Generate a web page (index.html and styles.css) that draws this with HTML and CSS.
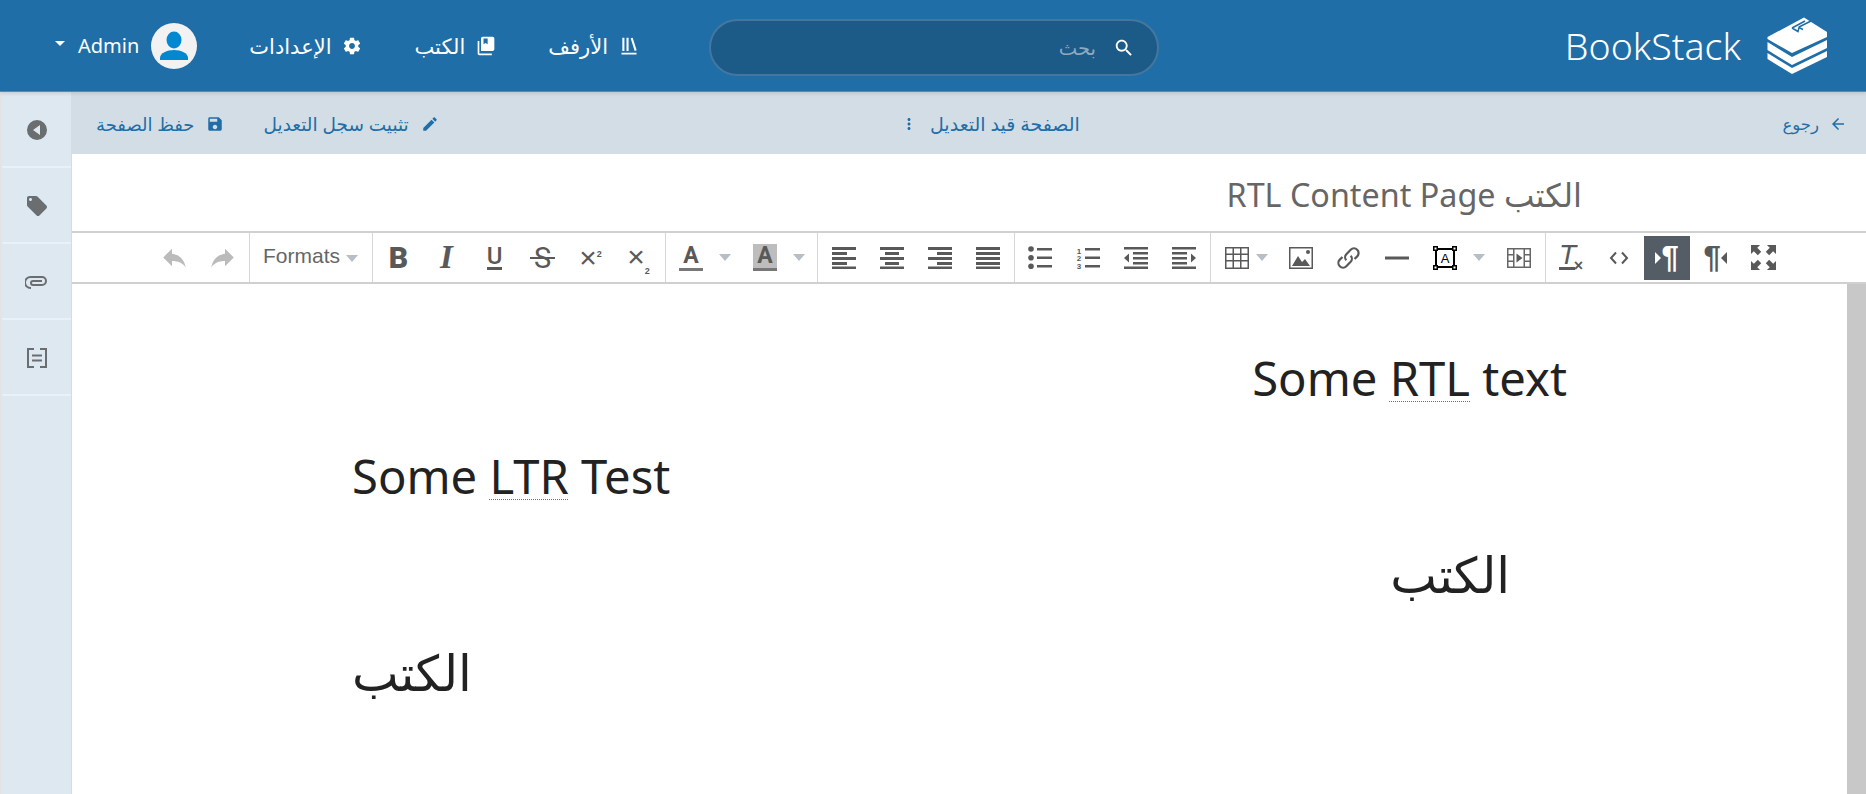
FILE: index.html
```html
<!DOCTYPE html>
<html dir="rtl" lang="ar">
<head>
  <meta charset="utf-8">
  <title>BookStack</title>
  <link rel="stylesheet" href="styles.css">
</head>
<body>

<header class="topbar">
  <a class="brand">
    <svg class="brand-logo" viewBox="8 7 61 58">
      <path fill="#fff" d="M8.500 27 45 7.500 68 22v5L33 43 8.500 29z"/>
      <path fill="#fff" d="M8.500 32 33 47l35-17v8L33 55 8.500 40z"/>
      <path fill="#fff" d="M8.500 43 33 58l35-17v6L33 64 8.500 49z"/>
      <path fill="none" stroke="#206ea7" stroke-width="1.500" d="M33 18l13-7M33 18l6 3.500 1-4 4 2M40 17l12-6"/>
    </svg>
    <span class="brand-name" dir="ltr">BookStack</span>
  </a>
  <div class="search">
    <svg class="search-icon" viewBox="0 0 24 24"><path d="M15.500 14h-.79l-.28-.27C15.410 12.590 16 11.110 16 9.500 16 5.910 13.090 3 9.500 3S3 5.910 3 9.500 5.910 16 9.500 16c1.610 0 3.090-.59 4.230-1.570l.27.28v.79l5 4.990L20.490 19l-4.990-5zm-6 0C7.010 14 5 11.990 5 9.500S7.010 5 9.500 5 14 7.010 14 9.500 11.990 14 9.500 14z"/></svg>
    <span class="search-text">بحث</span>
  </div>
  <nav class="links">
    <a class="link">
      <svg class="link-icon" viewBox="0 0 24 24"><path d="M4 2h2.500v16H4zM9 2h2.500v16H9zM14 2.800l2.400-.8 4.800 15.200-2.400.8zM3 20h18v2.200H3z"/></svg>
      <span>الأرفف</span>
    </a>
    <a class="link">
      <svg class="link-icon" viewBox="0 0 24 24"><path d="M2 6v15c0 1.200 1 2 2 2h15v-2H4V6z"/><path fill-rule="evenodd" d="M8 1h12c1 0 2 1 2 2v13c0 1-1 2-2 2H6V3c0-1 1-2 2-2zm1 2v7l2.500-1.500L14 10V3z"/></svg>
      <span>الكتب</span>
    </a>
    <a class="link">
      <svg class="link-icon" viewBox="0 0 24 24"><path d="M19.430 12.980c.04-.32.07-.64.07-.98s-.03-.66-.07-.98l2.110-1.650c.19-.15.24-.42.12-.64l-2-3.460c-.12-.22-.39-.3-.61-.22l-2.490 1c-.52-.4-1.080-.73-1.690-.98l-.38-2.650C14.460 2.180 14.250 2 14 2h-4c-.25 0-.46.18-.49.42l-.38 2.650c-.61.25-1.170.59-1.690.98l-2.490-1c-.23-.09-.49 0-.61.22l-2 3.460c-.13.22-.07.49.12.64l2.110 1.650c-.04.32-.07.65-.07.98s.03.66.07.98l-2.110 1.650c-.19.15-.24.42-.12.64l2 3.460c.12.22.39.3.61.22l2.490-1c.52.4 1.080.73 1.690.98l.38 2.650c.03.24.24.42.49.42h4c.25 0 .46-.18.49-.42l.38-2.650c.61-.25 1.170-.59 1.690-.98l2.490 1c.23.09.49 0 .61-.22l2-3.460c.12-.22.07-.49-.12-.64l-2.110-1.650zM12 15.500c-1.930 0-3.500-1.570-3.500-3.500s1.570-3.500 3.500-3.500 3.500 1.570 3.500 3.500-1.570 3.500-3.500 3.500z"/></svg>
      <span>الإعدادات</span>
    </a>
    <a class="user">
      <svg class="avatar" viewBox="0 0 46 46">
        <circle cx="23" cy="23" r="23" fill="#f2f2f2"/>
        <ellipse cx="23" cy="17" rx="7.500" ry="8.500" fill="#0288d1"/>
        <path fill="#0288d1" d="M9 37v-2c0-5 7-8 14-8s14 3 14 8v2z"/>
      </svg>
      <span dir="ltr">Admin</span>
      <i class="user-caret"></i>
    </a>
  </nav>
</header>

<main class="workspace">
  <section class="editor">
    <div class="actions">
      <a class="action action-back">
        <svg class="action-icon" viewBox="0 0 24 24"><path d="M20 11H7.830l5.590-5.590L12 4l-8 8 8 8 1.410-1.410L7.830 13H20v-2z"/></svg>
        <span class="back-label">رجوع</span>
      </a>
      <a class="action">
        <span class="state-label">الصفحة قيد التعديل</span>
        <svg class="action-icon" viewBox="0 0 24 24"><path d="M12 8c1.100 0 2-.9 2-2s-.9-2-2-2-2 .9-2 2 .9 2 2 2zm0 2c-1.100 0-2 .9-2 2s.9 2 2 2 2-.9 2-2-.9-2-2-2zm0 6c-1.100 0-2 .9-2 2s.9 2 2 2 2-.9 2-2-.9-2-2-2z"/></svg>
      </a>
      <div class="action-group">
        <a class="action">
          <svg class="action-icon" viewBox="0 0 24 24"><path d="M3 17.250V21h3.750L17.810 9.940l-3.750-3.750L3 17.250zM20.710 7.040c.39-.39.39-1.020 0-1.410l-2.340-2.340c-.39-.39-1.020-.39-1.410 0l-1.830 1.830 3.750 3.750 1.830-1.830z"/></svg>
          <span class="log-label">تثبيت سجل التعديل</span>
        </a>
        <a class="action">
          <svg class="action-icon" viewBox="0 0 24 24"><path d="M17 3H5c-1.110 0-2 .9-2 2v14c0 1.100.89 2 2 2h14c1.100 0 2-.9 2-2V7l-4-4zm-5 16c-1.660 0-3-1.340-3-3s1.340-3 3-3 3 1.340 3 3-1.340 3-3 3zm3-10H5V5h10v4z"/></svg>
          <span>حفظ الصفحة</span>
        </a>
      </div>
    </div>

    <div class="title">الكتب RTL Content Page</div>

    <div class="mce-bar">
      <div class="mce-group">
        <button class="mce-btn"><svg class="ic ic-full" viewBox="1 1 22 22"><path d="M1 1h8L6.500 3.500 10 7l-3 3-3.500-3.500L1 9zM23 1h-8l2.500 2.500L14 7l3 3 3.500-3.500L23 9zM1 23h8l-2.500-2.500L10 17l-3-3-3.500 3.500L1 15zM23 23h-8l2.500-2.500L14 17l3-3 3.500 3.500L23 15z"/></svg></button>
        <button class="mce-btn mce-pil"><span class="pil">¶</span><i class="tri tri-l"></i></button>
        <button class="mce-btn mce-pil is-active"><i class="tri tri-r"></i><span class="pil">¶</span></button>
        <button class="mce-btn"><svg class="ic" viewBox="0 0 24 24"><path fill="none" stroke="currentColor" stroke-width="2" d="M9 6.500 4 12l5 5.500M15 6.500l5 5.500-5 5.500"/></svg></button>
        <button class="mce-btn"><span class="tx"><i>T</i><b>×</b></span></button>
      </div>
      <div class="mce-group">
        <button class="mce-btn"><svg class="ic" viewBox="0 0 24 24"><path fill="#666" fill-rule="evenodd" d="M0 2h24v20H0zM1.500 3.500v17h21v-17z"/><path fill="#666" d="M6 3h1.500v18H6zM16.500 3h1.500v18h-1.500zM1 8h5v1.500H1zM1 14.500h5V16H1zM18 8h5v1.500h-5zM18 14.500h5V16h-5z"/><path d="M9.500 7.500l6 4.500-6 4.500z"/></svg></button>
        <button class="mce-btn mce-split">
          <span class="split-main"><svg class="ic ic-black" viewBox="0 0 24 24"><path fill="none" stroke="currentColor" stroke-width="2" d="M3 3h18v18H3z"/><path d="M0 0h5v5H0zM19 0h5v5h-5zM0 19h5v5H0zM19 19h5v5h-5z"/><path fill="#fff" d="M1.500 1.500h2v2h-2zM20.500 1.500h2v2h-2zM1.500 20.500h2v2h-2zM20.500 20.500h2v2h-2z"/><text x="12" y="17" font-size="13" text-anchor="middle" font-family="Liberation Sans">A</text></svg></span>
          <i class="caret"></i>
        </button>
        <button class="mce-btn"><svg class="ic" viewBox="0 0 24 24"><path d="M0 10.500h24v3H0z"/></svg></button>
        <button class="mce-btn"><svg class="ic ic-wide" viewBox="1 1 22 22"><path fill="none" stroke="currentColor" stroke-width="2" d="M10 14a4 4 0 0 1 0-5.500l4-4a4 4 0 0 1 6 6l-2.500 2.500M14 10a4 4 0 0 1 0 5.500l-4 4a4 4 0 0 1-6-6l2.500-2.500"/></svg></button>
        <button class="mce-btn"><svg class="ic" viewBox="0 0 24 24"><path fill-rule="evenodd" d="M0 1h24v22H0zM1.500 2.500v19h21v-19z"/><path d="M3 20l6-10 4 6 3-3 5 7z"/><circle cx="19" cy="6" r="2"/></svg></button>
        <button class="mce-btn mce-table">
          <svg class="ic" viewBox="0 0 24 24"><path fill-rule="evenodd" d="M0 1h24v22H0zM1.500 2.500v5h6v-5zm7.500 0v5h6v-5zm7.500 0v5h6v-5zM1.500 9v5h6V9zM9 9v5h6V9zm7.500 0v5h6V9zm-15 6.500v6h6v-6zm7.500 0v6h6v-6zm7.500 0v6h6v-6z"/></svg>
          <i class="caret"></i>
        </button>
      </div>
      <div class="mce-group">
        <button class="mce-btn"><svg class="ic" viewBox="0 0 24 24"><path d="M0 1h24v2.500H0zM9 6h15v2.500H9zM9 11h15v2.500H9zM9 16h15v2.500H9zM0 20.500h24V23H0zM0 12l5-4.500v9z" transform="matrix(-1 0 0 1 24 0)"/></svg></button>
        <button class="mce-btn"><svg class="ic" viewBox="0 0 24 24"><path d="M0 1h24v2.500H0zM9 6h15v2.500H9zM9 11h15v2.500H9zM9 16h15v2.500H9zM0 20.500h24V23H0zM0 12l5-4.500v9z"/></svg></button>
        <button class="mce-btn"><svg class="ic" viewBox="0 0 24 24"><path d="M9 2h15v2.500H9zM9 10.500h15V13H9zM9 19h15v2.500H9z"/><text x="3" y="7.500" font-size="8" font-weight="bold" text-anchor="middle" font-family="Liberation Sans">1</text><text x="3" y="15" font-size="8" font-weight="bold" text-anchor="middle" font-family="Liberation Sans">2</text><text x="3" y="22.500" font-size="8" font-weight="bold" text-anchor="middle" font-family="Liberation Sans">3</text></svg></button>
        <button class="mce-btn"><svg class="ic" viewBox="0 0 24 24"><path d="M9 2h15v2.500H9zM9 10.500h15V13H9zM9 19h15v2.500H9z"/><circle cx="3" cy="3" r="2.800"/><circle cx="3" cy="11.800" r="2.800"/><circle cx="3" cy="20.300" r="2.800"/></svg></button>
      </div>
      <div class="mce-group">
        <button class="mce-btn"><svg class="ic" viewBox="0 0 24 24"><path d="M0 1h24v3H0zM0 6h24v3H0zM0 11h24v3H0zM0 16h24v3H0zM0 20.500h24v2.500H0z"/></svg></button>
        <button class="mce-btn"><svg class="ic" viewBox="0 0 24 24"><path d="M0 1h24v3H0zM9 6h15v3H9zM0 11h24v3H0zM9 16h15v3H9zM0 20.500h24v2.500H0z"/></svg></button>
        <button class="mce-btn"><svg class="ic" viewBox="0 0 24 24"><path d="M0 1h24v3H0zM5 6h14v3H5zM0 11h24v3H0zM5 16h14v3H5zM0 20.500h24v2.500H0z"/></svg></button>
        <button class="mce-btn"><svg class="ic" viewBox="0 0 24 24"><path d="M0 1h24v3H0zM0 6h15v3H0zM0 11h24v3H0zM0 16h15v3H0zM0 20.500h24v2.500H0z"/></svg></button>
      </div>
      <div class="mce-group">
        <button class="mce-btn mce-split"><span class="split-main"><span class="letter-a is-bg">A</span></span><i class="caret"></i></button>
        <button class="mce-btn mce-split"><span class="split-main"><span class="letter-a">A</span></span><i class="caret"></i></button>
      </div>
      <div class="mce-group">
        <button class="mce-btn"><span class="script">×<sub>2</sub></span></button>
        <button class="mce-btn"><span class="script">×<sup>2</sup></span></button>
        <button class="mce-btn"><span class="strike">S</span></button>
        <button class="mce-btn"><span class="under">U</span></button>
        <button class="mce-btn"><span class="ital">I</span></button>
        <button class="mce-btn"><span class="bold">B</span></button>
      </div>
      <div class="mce-group">
        <button class="mce-formats"><i class="caret"></i><span dir="ltr">Formats</span></button>
      </div>
      <div class="mce-group is-last">
        <button class="mce-btn is-off"><svg class="ic ic-wide" viewBox="2 4 20 17"><path d="M14 9V5l7 7-7 7v-4.100c-5 0-8.500 1.600-11 5.100 1-5 4-10 11-11z"/></svg></button>
        <button class="mce-btn is-off"><svg class="ic ic-wide" viewBox="2 4 20 17"><path d="M10 9V5l-7 7 7 7v-4.100c5 0 8.500 1.600 11 5.100-1-5-4-10-11-11z"/></svg></button>
      </div>
    </div>

    <div class="pane">
      <div class="page">
        <p>Some <span class="typo">RTL</span> text</p>
        <p class="ltr" dir="ltr">Some <span class="typo">LTR</span> Test</p>
        <p class="ar ar-indent">الكتب</p>
        <p class="ar ltr">الكتب</p>
      </div>
      <div class="scroll"></div>
    </div>
  </section>

  <aside class="tools">
    <a class="tool"><svg class="tool-icon" viewBox="0 0 24 24"><path fill-rule="evenodd" d="M12 2a10 10 0 1 0 0 20 10 10 0 0 0 0-20zm3 5v10l-7-5z"/></svg></a>
    <a class="tool"><svg class="tool-icon" viewBox="0 0 24 24"><path d="M21.410 11.580l-9-9C12.050 2.220 11.550 2 11 2H4c-1.100 0-2 .9-2 2v7c0 .55.22 1.050.59 1.420l9 9c.36.36.86.58 1.410.58.55 0 1.050-.22 1.410-.59l7-7c.37-.36.59-.86.59-1.410 0-.55-.23-1.060-.59-1.420zM5.500 7C4.670 7 4 6.330 4 5.500S4.670 4 5.500 4 7 4.670 7 5.500 6.330 7 5.500 7z"/></svg></a>
    <a class="tool"><svg class="tool-icon" viewBox="0 0 24 24"><path fill="none" stroke="currentColor" stroke-width="2" d="M6 18h-.5a5 5 0 0 1 0-11H17a4 4 0 0 1 0 8H8a2 2 0 0 1 0-4h9"/></svg></a>
    <a class="tool"><svg class="tool-icon" viewBox="0 0 24 24"><path fill="none" stroke="currentColor" stroke-width="2" d="M9 3H3v18h6M15 3h6v18h-6M7 9.500h10M7 14.500h10"/></svg></a>
  </aside>
</main>

</body>
</html>
```
FILE: styles.css
```css
* {
  box-sizing: border-box;
}

html, body {
  margin: 0;
  height: 794px;
  overflow: hidden;
}

body {
  font-family: "Noto Sans", "DejaVu Sans", sans-serif;
  color: #222;
  background: #fff;
}

/* top bar */
.topbar {
  height: 92px;
  background: #206ea7;
  border-bottom: 1px solid #4f8dbb;
  display: flex;
  align-items: center;
  padding: 0 38px 0 40px;
  color: #fff;
  position: relative;
  z-index: 2;
  box-shadow: 0 1px 4px rgba(0, 0, 0, 0.15);
}

.brand {
  display: flex;
  align-items: center;
  gap: 26px;
  width: 261px;
}

.brand-logo {
  width: 61px;
  height: 58px;
  flex: none;
}

.brand-name {
  font-size: 37.500px;
  font-weight: 300;
  line-height: 1;
}

.search {
  width: 450px;
  height: 57px;
  margin: 4px 408px 0 0;
  border-radius: 29px;
  background: #1c5a88;
  border: 2px solid #43779f;
  display: flex;
  align-items: center;
  padding-right: 22px;
  gap: 17px;
}

.search-icon {
  width: 22px;
  height: 22px;
  fill: #fff;
}

.search-text {
  font-size: 19.500px;
  color: #8fa9c0;
}

.links {
  display: flex;
  align-items: center;
  margin-right: 70px;
  gap: 52px;
}

.link {
  display: flex;
  align-items: center;
  gap: 11px;
  font-size: 21px;
}

.link-icon {
  width: 20px;
  height: 20px;
  fill: #fff;
}

.user {
  display: flex;
  align-items: center;
  gap: 12px;
  font-size: 20px;
}

.avatar {
  width: 46px;
  height: 46px;
}

.user-caret {
  margin: -4px 1px 0 0;
  border: 5px solid transparent;
  border-top-color: #fff;
  border-bottom: 0;
}

/* page body */
.workspace {
  display: flex;
  height: 702px;
}

.editor {
  flex: 1;
  min-width: 0;
  display: flex;
  flex-direction: column;
}

.tools {
  width: 72px;
  background: #dee8f1;
  border-left: 2px solid #e4e4e4;
  border-right: 1px solid #d3dde6;
}

.tool {
  height: 76px;
  padding-top: 2px;
  display: flex;
  align-items: center;
  justify-content: center;
  color: #6b6e70;
  border-bottom: 2px solid #e9f0f6;
}

.tool-icon {
  width: 24px;
  height: 24px;
  fill: currentColor;
}

.actions {
  height: 62px;
  background: #d3dde6;
  display: grid;
  grid-template-columns: 770fr auto 807fr;
  align-items: center;
  padding: 1px 19px 0 24px;
  color: #206ea7;
  font-size: 18px;
}

.action {
  display: flex;
  align-items: center;
  gap: 12px;
}

.action-back {
  gap: 10px;
}

.back-label {
  font-size: 16.500px;
}

.state-label {
  font-size: 19px;
}

.log-label {
  font-size: 18.500px;
}

.action-group {
  display: flex;
  justify-content: flex-end;
  gap: 39px;
}

.action-icon {
  width: 18px;
  height: 18px;
  fill: currentColor;
  flex: none;
}

.title {
  height: 77px;
  padding: 2px 284px 0 0;
  display: flex;
  align-items: center;
  font-size: 32.300px;
  color: #666;
}

/* editor toolbar */
.mce-bar {
  height: 53px;
  flex: none;
  display: flex;
  padding-right: 77px;
  border-top: 2px solid #d0d0d0;
  border-bottom: 2px solid #d0d0d0;
  color: #595959;
}

.mce-group {
  display: flex;
  align-items: center;
  padding: 0 2px 0 1.500px;
  border-left: 1px solid #d6d6d6;
}

.mce-group.is-last {
  border-left: 0;
}

.mce-btn {
  width: 48px;
  height: 44px;
  padding: 0;
  border: 0;
  background: none;
  color: inherit;
  display: flex;
  align-items: center;
  justify-content: center;
  font-family: "Liberation Sans", sans-serif;
}

.mce-btn.is-active {
  background: #545c66;
  color: #fff;
  width: 46px;
  margin: 0 1px;
}

.mce-btn.is-off {
  color: #bbb;
}

.mce-pil {
  direction: ltr;
}

.mce-split {
  width: 74px;
  direction: ltr;
  justify-content: flex-start;
}

.split-main {
  width: 48px;
  display: flex;
  justify-content: center;
}

.mce-table {
  width: 64px;
  direction: ltr;
  gap: 3px;
  justify-content: flex-start;
  padding-left: 12px;
}

.ic {
  width: 24px;
  height: 24px;
  fill: currentColor;
  flex: none;
}

.ic-wide {
  width: 25px;
}

.ic-full {
  width: 25px;
  height: 25px;
}

.ic-black {
  color: #000;
}

.caret {
  border: 6px solid transparent;
  border-top: 7px solid #b6bec6;
  border-bottom: 0;
  display: block;
  margin-left: 4px;
}

.mce-formats {
  width: 119px;
  height: 44px;
  padding: 0;
  border: 0;
  background: none;
  color: #666;
  display: flex;
  align-items: center;
  justify-content: center;
  gap: 6px;
  font-family: "Liberation Sans", sans-serif;
  font-size: 21px;
  line-height: 40px;
}

.mce-formats span {
  margin-bottom: 3px;
}

.mce-formats .caret {
  margin: 2px 0 0;
}

.bold {
  font-family: Roboto, sans-serif;
  font-weight: 900;
  font-size: 30px;
}

.ital {
  font-family: "Liberation Serif", serif;
  font-style: italic;
  font-weight: bold;
  font-size: 33px;
}

.under {
  font-family: Roboto, sans-serif;
  font-weight: 500;
  font-size: 24px;
  line-height: 21px;
  border-bottom: 3px solid currentColor;
}

.strike {
  display: block;
  width: 25px;
  text-align: center;
  font-family: Roboto, sans-serif;
  font-size: 29px;
  line-height: 30px;
  background: linear-gradient(currentColor, currentColor) center / 100% 2px no-repeat;
}

.script {
  font-size: 30px;
  direction: ltr;
  line-height: 24px;
}

.script sub, .script sup {
  font-size: 9px;
  font-weight: bold;
  line-height: 0;
}

.letter-a {
  display: block;
  width: 24px;
  height: 27px;
  font-family: Roboto, sans-serif;
  font-weight: 700;
  font-size: 23px;
  line-height: 24px;
  text-align: center;
  border-bottom: 3px solid #777;
}

.letter-a.is-bg {
  background: #bdbdbd;
}

.tri {
  display: block;
  border-top: 6px solid transparent;
  border-bottom: 6px solid transparent;
}

.tri-l {
  border-right: 6px solid currentColor;
}

.tri-r {
  border-left: 6px solid currentColor;
}

.pil {
  font-family: "Liberation Sans", sans-serif;
  font-weight: bold;
  font-size: 31px;
  line-height: 1;
}

.tx {
  font-family: "Liberation Sans", sans-serif;
  font-style: italic;
  font-size: 28px;
  line-height: 24px;
  direction: ltr;
  display: block;
  height: 29px;
  width: 24px;
  position: relative;
}

.tx i {
  display: block;
  width: 16px;
  border-bottom: 3px solid currentColor;
  text-align: center;
}

.tx b {
  position: absolute;
  right: 0;
  bottom: -1px;
  font-style: normal;
  font-size: 16px;
  line-height: 15px;
}

/* content */
.pane {
  flex: 1;
  min-height: 0;
  display: flex;
  justify-content: space-between;
  overflow: hidden;
  position: relative;
}

.scroll {
  width: 19px;
  height: 100%;
  background: #c8c8c8;
  flex: none;
  order: -1;
}

.page {
  flex: 1;
  padding: 59px 280px 0 280px;
  font-size: 47.200px;
  line-height: 70px;
  color: #222;
}

.page p {
  margin: 0 0 28px;
}

.page .ltr {
  text-align: left;
}

.page .ar {
  font-size: 49.500px;
}

.page .ar-indent {
  padding-right: 57px;
}

.typo {
  text-decoration: underline dotted #e33;
  text-decoration-thickness: 1px;
  text-underline-offset: 5px;
}
```
